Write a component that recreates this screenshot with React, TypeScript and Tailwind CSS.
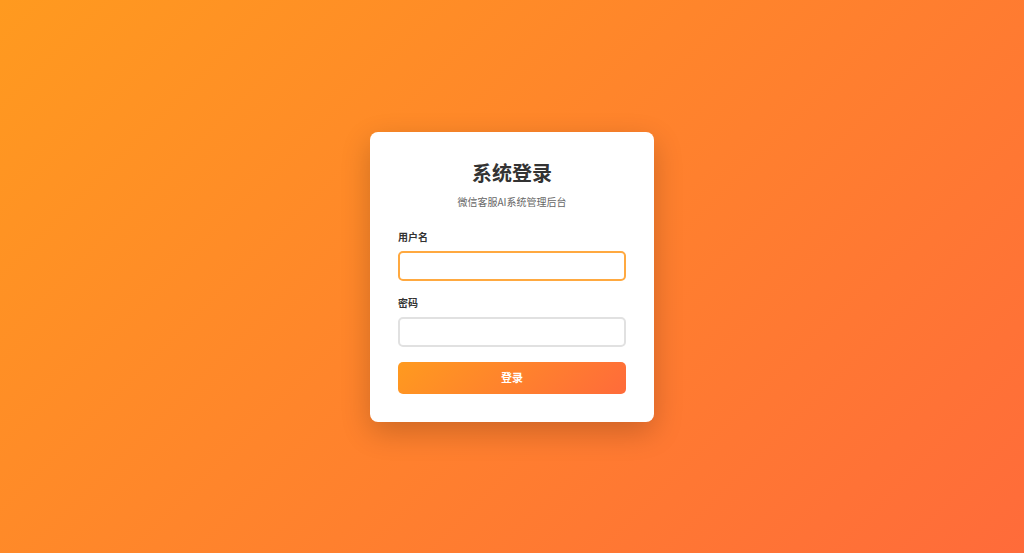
import React from 'react';

export default function App() {
    return (
        <div
            className="w-full h-[553px] flex items-center justify-center bg-[linear-gradient(135deg,#ff9a1f_0%,#ff6b3a_100%)]"
            style={{ fontFamily: '"Noto Sans CJK SC", "Noto Sans", sans-serif' }}
        >
            <div className="w-[284px] bg-white rounded-lg px-7 pt-[26px] pb-7 shadow-[0_10px_30px_rgba(0,0,0,0.2)]">
                <h1 className="text-center text-[20px] leading-[30px] font-bold text-[#333]">系统登录</h1>
                <p className="text-center text-[10px] leading-[15px] text-[#666] mt-[6px]">微信客服AI系统管理后台</p>

                <div className="mt-5">
                    <label className="block text-[10px] leading-[15px] font-bold text-[#333] mb-[7px]">用户名</label>
                    <input
                        type="text"
                        className="block w-full h-[30px] rounded-[5px] border-2 border-[#ffa940] outline-none px-2 text-[11px]"
                    />
                </div>

                <div className="mt-[14px]">
                    <label className="block text-[10px] leading-[15px] font-bold text-[#333] mb-[7px]">密码</label>
                    <input
                        type="password"
                        className="block w-full h-[30px] rounded-[5px] border-2 border-[#e1e1e1] outline-none px-2 text-[11px]"
                    />
                </div>

                <button className="mt-[15px] w-full h-[32px] rounded-[5px] text-white text-[11px] font-bold bg-[linear-gradient(135deg,#ff9a1f_0%,#ff6b3a_100%)]">
                    登录
                </button>
            </div>
        </div>
    );
}
